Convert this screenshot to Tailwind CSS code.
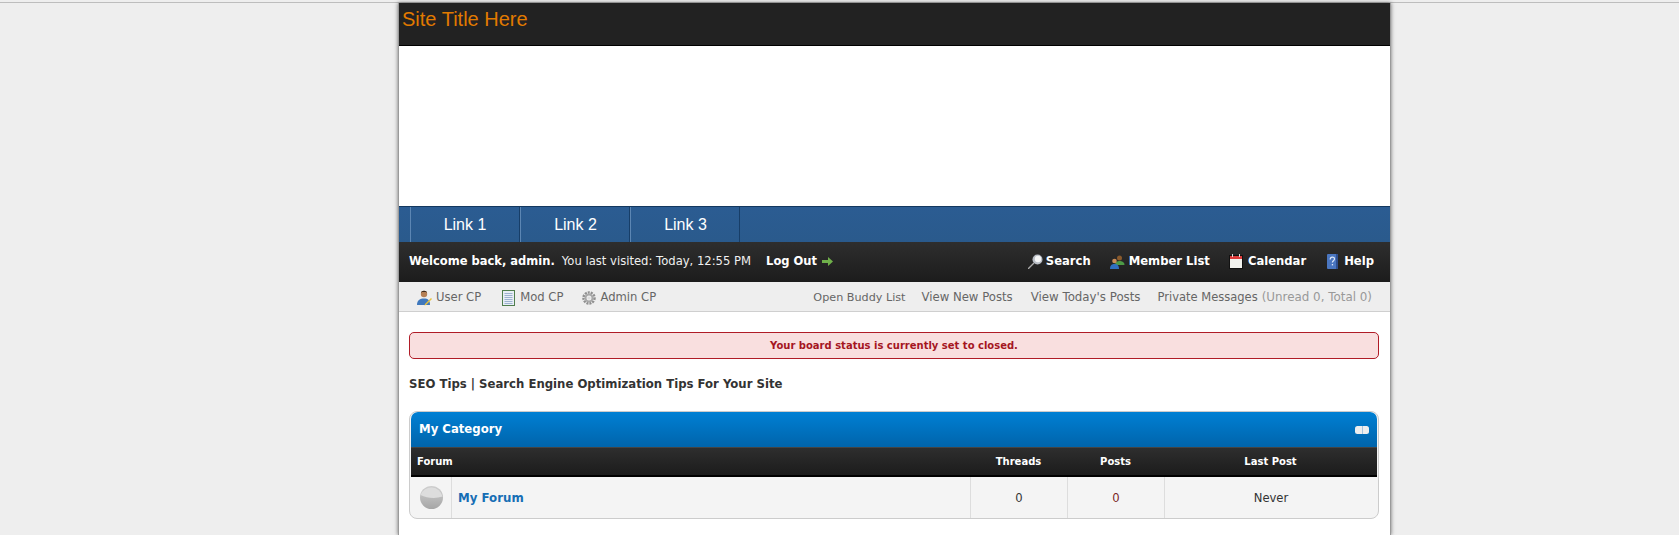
<!doctype html>
<html>
<head>
<meta charset="utf-8">
<title>Site Title Here</title>
<script src="https://cdn.jsdelivr.net/npm/@tailwindcss/browser@4"></script>
</head>
<body class="h-[535px] overflow-hidden bg-[#eeeeee] font-['DejaVu_Sans',Verdana,sans-serif] text-[12px] text-[#333333]">
  <div class="h-[3px] border-b border-[#bdbdbd]"></div>

  <div class="ml-[398px] h-[532px] w-[993px] overflow-hidden border-x border-[#9a9a9a] bg-white shadow-[0_0_4px_rgba(0,0,0,0.55)]">
    <!-- header -->
    <div class="h-[43px] border-b border-black bg-[#222222] pl-[3px] pt-[4px] font-['Liberation_Sans',Arial,sans-serif] text-[20px] leading-[24px] text-[#e17a00]">Site Title Here</div>
    <div class="h-[160px] bg-white"></div>

    <!-- nav -->
    <div class="flex h-[36px] border-t border-[#14385f] bg-gradient-to-b from-[#2b5c92] to-[#2a5a8c] pl-[11px] font-['Liberation_Sans',Arial,sans-serif] text-[16px] text-white">
      <a href="#" class="flex w-[110px] items-center justify-center border-x border-l-[#5c86b3] border-r-[#173e68]">Link 1</a>
      <a href="#" class="flex w-[110px] items-center justify-center border-r border-r-[#173e68] pl-[2px] shadow-[inset_1px_0_0_#5c86b3]">Link 2</a>
      <a href="#" class="flex w-[110px] items-center justify-center border-r border-r-[#173e68] pl-[2px] shadow-[inset_1px_0_0_#5c86b3]">Link 3</a>
    </div>

    <!-- welcome bar -->
    <div class="flex h-[40px] items-center justify-between bg-gradient-to-b from-[#2e2e2e] to-[#1c1c1c] pl-[10px] pr-[16px] text-white">
      <div class="flex items-center">
        <strong class="text-[11.5px]">Welcome back, admin.</strong>
        <span class="ml-[7px] text-[11.6px] text-[#f0f0f0]">You last visited: Today, 12:55 PM</span>
        <a href="#" class="ml-[15px] flex items-center gap-[5px] text-[11.5px] font-bold">Log Out
          <svg width="11" height="9" viewBox="0 0 11 9"><path d="M0 3h6V0l5 4.500L6 9V6H0z" fill="#6fb04a"/></svg>
        </a>
      </div>
      <div class="flex items-center text-[11.6px] font-bold">
        <a href="#" class="flex items-center gap-[3px]">
          <svg width="15" height="15" viewBox="0 0 15 15"><path d="M0 15l6-6" stroke="#aaaaaa" stroke-width="1.300"/><circle cx="9.500" cy="5.500" r="5" fill="#b9bec6"/><circle cx="10" cy="5" r="3.200" fill="#f4f5f6"/></svg>
          Search
        </a>
        <a href="#" class="ml-[19px] flex items-center gap-[4px]">
          <svg width="15" height="14" viewBox="0 0 15 14"><circle cx="9.500" cy="3" r="2.500" fill="#8a5a2c"/><path d="M5 10c0-3 2-4 4.500-4s5 1 5 4z" fill="#4d9a45"/><circle cx="4.500" cy="6" r="2.300" fill="#c98d57"/><path d="M0 14c0-4 2-5 4.500-5S9 10 9 14z" fill="#2f6fc0"/></svg>
          Member List
        </a>
        <a href="#" class="ml-[19px] flex items-center gap-[5px]">
          <svg width="14" height="15" viewBox="0 0 14 15"><rect y="1" width="14" height="14" fill="#111111"/><rect x="1" y="5" width="12" height="9" fill="#f2f2ee"/><rect x="1" y="2" width="12" height="3" fill="#dd3b3b"/><path d="M3.500 0v3M10.500 0v3" stroke="#dddddd" stroke-width="1"/></svg>
          Calendar
        </a>
        <a href="#" class="ml-[21px] flex items-center gap-[6px]">
          <svg width="11" height="15" viewBox="0 0 11 15"><rect width="11" height="15" rx="1" fill="#4a76c0"/><rect x="9" width="2" height="15" fill="#2f4f8f"/><path d="M3.200 5.500c0-3 4.300-3 4.300-.5 0 1.700-2.100 1.700-2.100 3.500" fill="none" stroke="#dce6f7" stroke-width="1.200"/><rect x="4.800" y="10" width="1.300" height="1.400" fill="#dce6f7"/></svg>
          Help
        </a>
      </div>
    </div>

    <!-- secondary bar -->
    <div class="flex h-[30px] items-center justify-between border-b border-[#cfcfcf] bg-[#eeeeee] pl-[18px] pr-[18px] pt-[3px] text-[11.6px] text-[#666666]">
      <div class="flex items-center">
        <a href="#" class="flex items-center gap-[4px]">
          <svg width="15" height="16" viewBox="0 0 15 16"><circle cx="7" cy="4" r="3.200" fill="#b57f55"/><path d="M4 3c0-3 6-3 6 0l-1-1H5z" fill="#3b2a1c"/><path d="M0 15c0-5 3-6.500 7-6.500s6 1.500 6 6.500z" fill="#3f78bd"/><path d="M8 14l6-6 1 1-6 6-1.500.5z" fill="#e8c23c"/></svg>
          User CP
        </a>
        <a href="#" class="ml-[21px] flex items-center gap-[5px]">
          <svg width="13" height="16" viewBox="0 0 13 16"><rect x=".5" y=".5" width="12" height="15" fill="#e8eef6" stroke="#4f7d4d"/><path d="M2.500 3.500h8M2.500 5.500h8M2.500 7.500h8M2.500 9.500h8M2.500 11.500h8M2.500 13.500h8" stroke="#9db2d0" stroke-width="1"/></svg>
          Mod CP
        </a>
        <a href="#" class="ml-[19px] flex items-center gap-[4px]">
          <svg width="14" height="14" viewBox="0 0 14 14"><circle cx="7" cy="7" r="5.500" fill="none" stroke="#8f8f8f" stroke-width="2.500" stroke-dasharray="2 1"/><circle cx="7" cy="7" r="3.500" fill="none" stroke="#a8a8a8" stroke-width="2"/><circle cx="7" cy="7" r="1.500" fill="#dddddd"/></svg>
          Admin CP
        </a>
      </div>
      <div class="flex items-center">
        <a href="#" class="text-[11.2px]">Open Buddy List</a>
        <a href="#" class="ml-[16px] text-[11.7px]">View New Posts</a>
        <a href="#" class="ml-[18px] text-[11.8px]">View Today's Posts</a>
        <a href="#" class="ml-[17px] text-[11.5px]">Private Messages</a>
        <span class="ml-[4px] text-[11.9px] text-[#999999]">(Unread 0, Total 0)</span>
      </div>
    </div>

    <div class="pl-[10px] pr-[11px] pt-[20px]">
      <!-- board closed notice -->
      <div class="flex h-[27px] items-center justify-center rounded-[5px] border border-[#b01c27] bg-[#f9dfdf] text-[10px] font-bold text-[#a5161f]">Your board status is currently set to closed.</div>

      <div class="mt-[17px] text-[11.7px] leading-[16px] font-bold text-[#333333]">SEO Tips | Search Engine Optimization Tips For Your Site</div>

      <!-- forum table -->
      <div class="mt-[19px] overflow-hidden rounded-[8px] border border-[#cccccc] bg-[#f4f4f4] px-px">
        <div class="flex h-[35px] items-center justify-between rounded-t-[7px] bg-gradient-to-b from-[#0080d4] to-[#0064ab] pl-[8px] pr-[8px] text-white">
          <strong class="text-[11.7px]">My Category</strong>
          <svg width="14" height="8" viewBox="0 0 14 8"><rect width="14" height="8" rx="2.500" fill="#eeeeee"/><rect x="7" width="1" height="8" fill="#a9c4dc"/></svg>
        </div>
        <div class="grid h-[30px] grid-cols-[559px_97px_97px_1fr] items-center border-b-2 border-t border-b-black border-t-[#444444] bg-gradient-to-b from-[#2e2e2e] to-[#1c1c1c] text-[10px] font-bold text-white">
          <div class="pl-[6px]">Forum</div>
          <div class="text-center">Threads</div>
          <div class="text-center">Posts</div>
          <div class="text-center">Last Post</div>
        </div>
        <div class="grid h-[41px] grid-cols-[41px_518px_97px_97px_1fr] items-stretch">
          <div class="flex items-center justify-center border-r border-[#dddddd]">
            <svg width="23" height="23" viewBox="0 0 23 23"><defs><linearGradient id="off" x1="0" y1="0" x2="0" y2="1"><stop offset="0" stop-color="#cfcfcf"/><stop offset="1" stop-color="#a6a6a6"/></linearGradient></defs><circle cx="11.500" cy="11.500" r="11.500" fill="url(#off)"/><path d="M.5 9a11.500 11.500 0 0 1 22 1.500C15 13 7 12 .5 9z" fill="#dddddd"/></svg>
          </div>
          <div class="flex items-center pl-[6px] pt-[2px] text-[11.8px] font-bold text-[#166eb5]">My Forum</div>
          <div class="flex items-center justify-center border-l border-[#dddddd] pt-[2px] text-[11.6px]">0</div>
          <div class="flex items-center justify-center border-l border-[#dddddd] pt-[2px] text-[11.6px] text-[#7a1f1f]">0</div>
          <div class="flex items-center justify-center border-l border-[#dddddd] pt-[2px] text-[11.6px]">Never</div>
        </div>
      </div>
    </div>
  </div>
</body>
</html>
